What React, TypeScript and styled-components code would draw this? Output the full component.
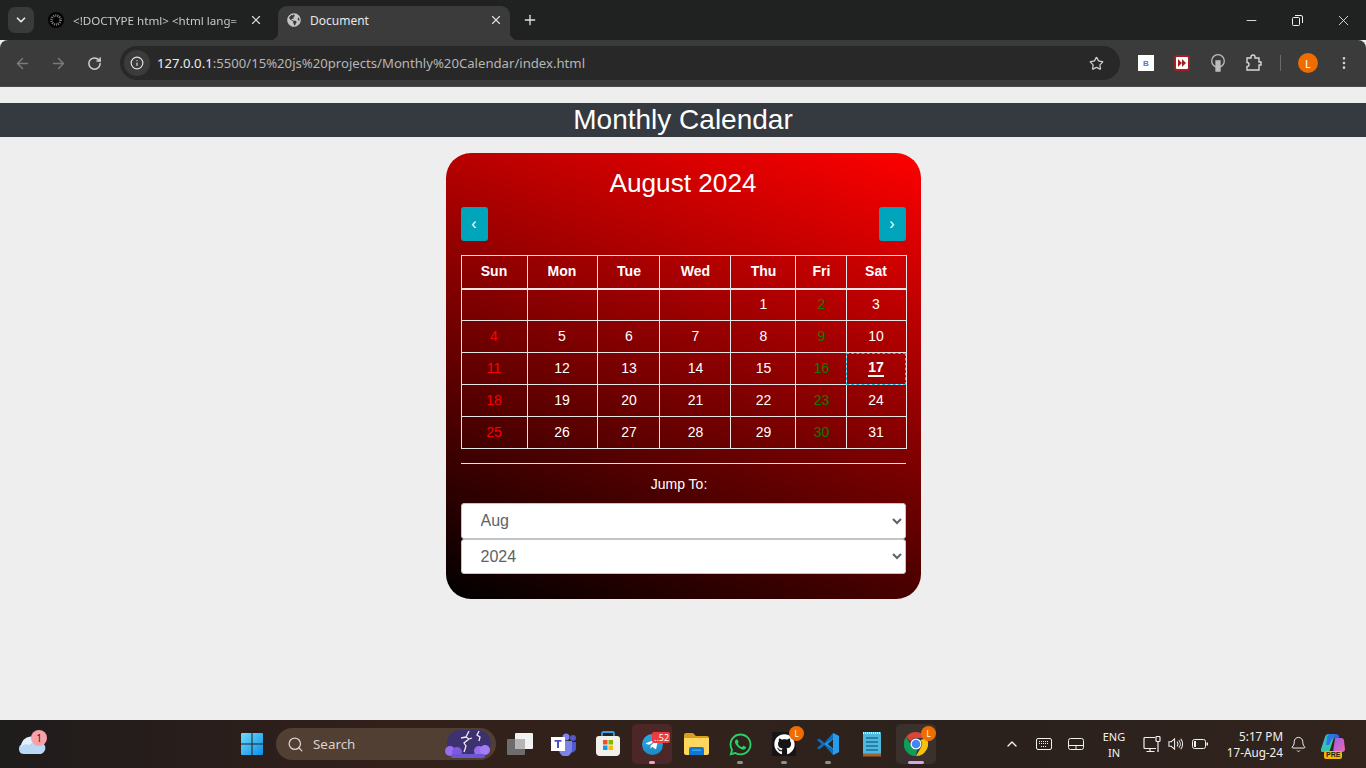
import { ReactNode } from "react";
import styled, { createGlobalStyle } from "styled-components";
import {
  ArrowLeft,
  ArrowRight,
  Bell,
  ChevronDown,
  ChevronUp,
  Info,
  Minus,
  MoreVertical,
  Plus,
  RotateCw,
  Search,
  Star,
  X,
} from "lucide-react";
import { FaGithub, FaGlobeAmericas, FaTelegramPlane, FaWhatsapp } from "react-icons/fa";

const GlobalStyle = createGlobalStyle`
  html, body {
    margin: 0;
    padding: 0;
    height: 768px;
    overflow: hidden;
    background: #eeeeee;
    font-family: "Liberation Sans", Arial, sans-serif;
  }
  * {
    box-sizing: border-box;
  }
`;

const Screen = styled.div`
  width: 1366px;
  height: 768px;
  display: flex;
  flex-direction: column;
  overflow: hidden;
`;

/* browser chrome */

const TabStrip = styled.div`
  height: 40px;
  background: #202222;
  display: flex;
  align-items: flex-end;
  padding-left: 8px;
  font-family: "Noto Sans", "Open Sans", sans-serif;
`;

const TabSearch = styled.div`
  width: 26px;
  height: 26px;
  margin-bottom: 7px;
  border-radius: 7px;
  background: #393a3a;
  color: #e6e6e6;
  display: flex;
  align-items: center;
  justify-content: center;
`;

const Tab = styled.div<{ $active?: boolean }>`
  position: relative;
  height: 34px;
  display: flex;
  align-items: center;
  font-size: 12px;
  padding: ${(p) => (p.$active ? "0 8px 6px 9px" : "0 8px 6px")};
  margin-left: ${(p) => (p.$active ? "8px" : "6px")};
  width: ${(p) => (p.$active ? "232px" : "230px")};
  color: ${(p) => (p.$active ? "#e8e8e8" : "#c8c8c8")};
  background: ${(p) => (p.$active ? "#3b3b3b" : "transparent")};
  border-radius: 9px 9px 0 0;

  ${(p) =>
    p.$active &&
    `
    &::before, &::after {
      content: "";
      position: absolute;
      bottom: 0;
      width: 8px;
      height: 8px;
    }
    &::before {
      left: -8px;
      background: radial-gradient(circle at 0 0, transparent 8px, #3b3b3b 8.5px);
    }
    &::after {
      right: -8px;
      background: radial-gradient(circle at 100% 0, transparent 8px, #3b3b3b 8.5px);
    }
  `}
`;

const TabTitle = styled.span<{ $fade?: boolean }>`
  flex: 1;
  margin-left: 9px;
  white-space: nowrap;
  ${(p) =>
    p.$fade &&
    `
    font-size: 11.6px;
    -webkit-mask-image: linear-gradient(to right, #000 88%, transparent 100%);
    mask-image: linear-gradient(to right, #000 88%, transparent 100%);
  `}
`;

const TabClose = styled(X)`
  color: #dddddd;
  flex: none;
  margin-right: -1px;
`;

const NewTab = styled(Plus)`
  color: #e0e0e0;
  margin: 0 0 12px 12px;
`;

const WindowControls = styled.div`
  margin-left: auto;
  align-self: stretch;
  display: flex;
`;

const WindowButton = styled.div`
  width: 46px;
  color: #f2f2f2;
  display: flex;
  align-items: center;
  justify-content: center;
`;

const Toolbar = styled.div`
  height: 47px;
  background: #3b3b3b;
  border-radius: 8px 8px 0 0;
  border-bottom: 1px solid #4a4a4a;
  display: flex;
  align-items: center;
  padding-left: 4px;
`;

const NavButton = styled.div<{ $dim?: boolean }>`
  width: 36px;
  height: 32px;
  display: flex;
  align-items: center;
  justify-content: center;
  color: ${(p) => (p.$dim ? "#7b7b7b" : "#d0d0d0")};
`;

const AddressBar = styled.div`
  width: 1000px;
  height: 34px;
  margin-left: 8px;
  border-radius: 17px;
  background: #282828;
  display: flex;
  align-items: center;
  padding: 0 16px 0 4px;
`;

const InfoChip = styled.div`
  width: 26px;
  height: 26px;
  border-radius: 50%;
  background: #3b3b3b;
  color: #e2e2e2;
  display: flex;
  align-items: center;
  justify-content: center;
`;

const Url = styled.div`
  flex: 1;
  margin-left: 7px;
  font-family: "Noto Sans", "Open Sans", sans-serif;
  font-size: 13.15px;
  color: #b6b6b6;
  white-space: nowrap;
`;

const UrlHost = styled.span`
  color: #ececec;
`;

const Extensions = styled.div`
  display: flex;
  align-items: center;
  margin-left: 8px;
  flex: 1;
`;

const ExtSlot = styled.div`
  width: 36px;
  height: 32px;
  display: flex;
  align-items: center;
  justify-content: center;
  flex: none;
`;

const ExtB = styled.div`
  width: 16px;
  height: 16px;
  background: #ffffff;
  color: #6a6ad0;
  font: bold 8px "Liberation Sans", sans-serif;
  display: flex;
  align-items: center;
  justify-content: center;
`;

const ToolbarRule = styled.div`
  width: 1px;
  height: 16px;
  background: #6a6a6a;
  margin: 0 9px 0 8px;
`;

const Avatar = styled.div<{ $size?: number; $font?: number }>`
  width: ${(p) => p.$size ?? 20}px;
  height: ${(p) => p.$size ?? 20}px;
  border-radius: 50%;
  background: #ef6c00;
  color: #ffffff;
  font-family: "Noto Sans", sans-serif;
  font-size: ${(p) => p.$font ?? 11}px;
  display: flex;
  align-items: center;
  justify-content: center;
`;

/* page */

const Page = styled.main`
  flex: 1;
  background: #eeeeee;
  padding-top: 16px;
  display: flex;
  flex-direction: column;
  align-items: center;
`;

const Banner = styled.h1`
  width: 100%;
  height: 34px;
  margin: 0;
  background: #343a40;
  color: #ffffff;
  font-size: 28px;
  font-weight: 400;
  line-height: 33px;
  text-align: center;
`;

const Card = styled.section`
  width: 475px;
  height: 446px;
  margin-top: 16px;
  padding: 12px 15px 0;
  border-radius: 25px;
  background: linear-gradient(200deg, #ff0000, #000000);
  color: #ffffff;
`;

const MonthTitle = styled.h3`
  margin: 0;
  font-size: 26.2px;
  font-weight: 400;
  line-height: 36px;
  text-align: center;
`;

const NavRow = styled.div`
  display: flex;
  justify-content: space-between;
  margin-top: 6px;
`;

const MonthButton = styled.button`
  width: 27px;
  height: 34px;
  padding: 0;
  border: none;
  border-radius: 3px;
  background: #00a5bb;
  color: #ffffff;
  font: 16px "Liberation Sans", sans-serif;
`;

const Table = styled.table`
  width: 445px;
  margin-top: 14px;
  table-layout: fixed;
  border-collapse: collapse;
  font-size: 14px;

  th:nth-child(n + 3):nth-child(-n + 6),
  td:nth-child(n + 3):nth-child(-n + 6) {
    padding-left: 2px;
  }
`;

const Col = styled.col<{ $w: number }>`
  width: ${(p) => p.$w}px;
`;

const HeadCell = styled.th`
  height: 33px;
  padding: 0 0 2px;
  border: 1px solid #e6e6e6;
  border-bottom-width: 2px;
  font-weight: 700;
  text-align: center;
`;

const Cell = styled.td<{ $tone?: "sun" | "fri"; $today?: boolean }>`
  height: 32px;
  padding: 0 0 2px;
  border: 1px solid #e6e6e6;
  text-align: center;
  color: ${(p) =>
    p.$tone === "sun" ? "#ff0000" : p.$tone === "fri" ? "#107a00" : "#ffffff"};
  ${(p) =>
    p.$today &&
    `
    font-weight: 700;
    outline: 1px dashed #19c4e6;
    outline-offset: -1px;
  `}
`;

const Today = styled.span`
  display: inline-block;
  margin-top: 2px;
  line-height: 15px;
  border-bottom: 2px solid #ffffff;
`;

const Rule = styled.hr`
  height: 1px;
  margin: 14px 0 0;
  border: none;
  background: #e6e6e6;
`;

const JumpLabel = styled.label`
  display: block;
  margin: 12px 8px 11px 0;
  font-size: 14px;
  line-height: 16px;
  text-align: center;
`;

const SelectBox = styled.select`
  display: block;
  width: 100%;
  height: 35.5px;
  padding: 0 0 0 15px;
  border: 1px solid #bfc5c8;
  border-radius: 3px;
  background: #ffffff;
  color: #5c6268;
  font: 16px "Liberation Sans", sans-serif;
`;

/* taskbar */

const Taskbar = styled.footer`
  height: 48px;
  flex: none;
  display: flex;
  align-items: center;
  background: linear-gradient(
    to right,
    #1f1c1c 0%,
    #33201a 30%,
    #30221c 55%,
    #2a211d 75%,
    #33241d 100%
  );
  color: #f2f2f2;
  font-family: "Noto Sans", "Open Sans", sans-serif;
`;

const Slot = styled.div<{ $w?: number; $ml?: number; $active?: "pink" | "plain" }>`
  position: relative;
  width: ${(p) => p.$w ?? 44}px;
  height: 40px;
  margin-left: ${(p) => p.$ml ?? 0}px;
  flex: none;
  display: flex;
  align-items: center;
  justify-content: center;
  &::before {
    content: "";
    position: absolute;
    top: 0;
    bottom: 0;
    left: 2px;
    right: 2px;
    border-radius: 5px;
    background: ${(p) =>
      p.$active === "pink"
        ? "rgba(120, 50, 60, 0.4)"
        : p.$active === "plain"
          ? "rgba(255, 255, 255, 0.07)"
          : "transparent"};
  }
  & > * {
    position: relative;
  }
`;

const RunDot = styled.span<{ $color?: string; $wide?: boolean }>`
  position: absolute !important;
  bottom: 0;
  left: 50%;
  width: ${(p) => (p.$wide ? 16 : 6)}px;
  height: 3px;
  margin-left: ${(p) => (p.$wide ? -8 : -3)}px;
  border-radius: 2px;
  background: ${(p) => p.$color ?? "#8f8f8f"};
`;

const Badge = styled.span`
  position: absolute !important;
  top: 2px;
  right: 2px;
`;

const WeatherBadge = styled.span`
  position: absolute !important;
  top: 6px;
  left: 21px;
  width: 16px;
  height: 16px;
  border-radius: 50%;
  background: #f9a0aa;
  color: #222222;
  font-size: 10px;
  line-height: 16px;
  text-align: center;
`;

const CountBadge = styled.span`
  position: absolute !important;
  top: 8px;
  left: 22px;
  padding: 0 1px 0 2px;
  height: 11px;
  border-radius: 2px;
  background: #ee3b3b;
  color: #ffffff;
  font-size: 9px;
  line-height: 11px;
`;

const TelegramDisc = styled.div`
  width: 21px;
  height: 21px;
  border-radius: 50%;
  background: linear-gradient(to bottom, #2fa8e0, #1c8ac8);
  display: flex;
  align-items: center;
  justify-content: center;
`;

const GithubTile = styled.div`
  width: 24px;
  height: 24px;
  background: #151515;
  display: flex;
  align-items: center;
  justify-content: center;
`;

const SearchBox = styled.div`
  width: 220px;
  height: 32px;
  margin: 0 2px;
  flex: none;
  border-radius: 16px;
  background: #523f33;
  display: flex;
  align-items: center;
  padding: 0 5px 0 11px;
  font-size: 13.4px;
  color: #d8d4d0;
`;

const SearchLabel = styled.span`
  margin-left: 9px;
  flex: 1;
`;

const Tray = styled.div`
  margin-left: 62px;
  display: flex;
  align-items: center;
  height: 40px;
`;

const TrayItem = styled.div<{ $w: number }>`
  width: ${(p) => p.$w}px;
  flex: none;
  display: flex;
  align-items: center;
  justify-content: center;
`;

const Lang = styled.div`
  width: 44px;
  margin-left: 4px;
  padding-top: 2px;
  text-align: center;
  font-size: 11px;
  line-height: 16px;
`;

const Clock = styled.div`
  width: 67px;
  text-align: right;
  font-size: 11.7px;
  line-height: 16px;
  white-space: nowrap;
`;

const Pre = styled.span`
  position: absolute !important;
  bottom: 5px;
  left: 50%;
  margin-left: -9px;
  padding: 0 2px;
  border-radius: 2px;
  background: #f5b800;
  color: #222222;
  font: bold 7px/8px "Liberation Sans", sans-serif;
`;

const Squares = () => (
  <svg width="22" height="22" viewBox="0 0 22 22">
    <defs>
      <linearGradient id="win" x1="0" y1="0" x2="1" y2="1">
        <stop offset="0" stopColor="#6fdcff" />
        <stop offset="1" stopColor="#0b8fe6" />
      </linearGradient>
    </defs>
    <path fill="url(#win)" d="M0 1a1 1 0 0 1 1-1h9.500v10.500H0zM11.500 0H21a1 1 0 0 1 1 1v9.500H11.500zM0 11.500h10.500V22H1a1 1 0 0 1-1-1zM11.500 11.500H22V21a1 1 0 0 1-1 1h-9.500z" />
  </svg>
);

const Weather = () => (
  <svg width="28" height="22" viewBox="0 0 28 22">
    <circle cx="19" cy="7" r="6" fill="#f08a3c" />
    <path fill="#b9d8f5" d="M6 21a5 5 0 0 1-1-9.900A8 8 0 0 1 19 9a6 6 0 0 1 4 12z" />
    <path fill="#e4f1fc" d="M3 14a6 6 0 0 1 8-2 8 8 0 0 1 12 1 8 8 0 0 0-20 1z" />
  </svg>
);

const Storm = () => (
  <svg width="48" height="28" viewBox="0 0 48 28">
    <rect x="4" width="44" height="26" rx="13" fill="#3d3170" />
    <circle cx="7" cy="21" r="5" fill="#9a6cf0" />
    <circle cx="14" cy="22" r="5" fill="#8058e0" />
    <circle cx="36" cy="21" r="5" fill="#9a6cf0" />
    <circle cx="42" cy="20" r="5" fill="#a67cf4" />
    <rect x="8" y="24" width="34" height="4" rx="2" fill="#6a58d0" />
    <path fill="none" stroke="#efeaf5" strokeWidth="1.300" d="M26 1l-3 6 3 2-5 4 2 3-2 6M36 1l-2 4 3 2-1 4M23 7l-5 1M26 9l3-1" />
  </svg>
);

const TaskView = () => (
  <svg width="26" height="24" viewBox="0 0 26 24">
    <rect x="8" y="1" width="18" height="16" rx="1" fill="#f1f1f1" />
    <rect x="0" y="7" width="18" height="16" rx="1" fill="#6d6d6d" />
    <rect x="8" y="7" width="10" height="10" fill="#b5b5b5" />
  </svg>
);

const Teams = () => (
  <svg width="26" height="24" viewBox="0 0 26 24">
    <circle cx="15" cy="5" r="3.500" fill="#7b83eb" />
    <circle cx="22" cy="6" r="3" fill="#5059c9" />
    <path fill="#5059c9" d="M18 10h7v7a4 4 0 0 1-7 2z" />
    <path fill="#7b83eb" d="M8 9h13v9a6 6 0 0 1-13 0z" />
    <rect x="0" y="5" width="14" height="14" fill="#ffffff" />
    <path fill="#4b53bc" d="M3.500 8h7v1.800H8v6.200H6V9.800H3.500z" />
  </svg>
);

const StoreBag = () => (
  <svg width="24" height="26" viewBox="0 0 24 26">
    <path fill="none" stroke="#3aa0e8" strokeWidth="1.800" d="M6 6V2.500a1.500 1.500 0 0 1 1.500-1.500h9a1.500 1.500 0 0 1 1.500 1.500V6" />
    <path fill="#f2f0ed" d="M0 8a3 3 0 0 1 3-3h18a3 3 0 0 1 3 3v13a4 4 0 0 1-4 4H4a4 4 0 0 1-4-4z" />
    <rect x="7" y="9" width="4.500" height="4.500" fill="#f25022" />
    <rect x="12.500" y="9" width="4.500" height="4.500" fill="#7fba00" />
    <rect x="7" y="14.500" width="4.500" height="4.500" fill="#00a4ef" />
    <rect x="12.500" y="14.500" width="4.500" height="4.500" fill="#ffb900" />
  </svg>
);

const Folder = () => (
  <svg width="25" height="22" viewBox="0 0 25 22">
    <path fill="#d99f1c" d="M0 2a2 2 0 0 1 2-2h7l3 3h11a2 2 0 0 1 2 2v4H0z" />
    <path fill="#ffd75e" d="M0 5h25v15a2 2 0 0 1-2 2H2a2 2 0 0 1-2-2z" />
    <path fill="#0f78d4" d="M5 16a2 2 0 0 1 2-2h11a2 2 0 0 1 2 2v6H5z" />
    <path fill="#3ba4ee" d="M8 16.500h9v1.500H8z" />
  </svg>
);

const VsCode = () => (
  <svg width="24" height="24" viewBox="0 0 24 24">
    <path fill="#0a6fbf" d="M1 8l2-1.500 5.500 4.200L17 1l6 3v16l-6 3-8.500-9.700L3 17.500 1 16l4.500-4z" />
    <path fill="#2b9cea" d="M17 1l6 3v16l-6 3V7l-8.500 5L17 17z" />
    <path fill="#26272a" d="M17 7.500v9l-5.500-4.500z" />
  </svg>
);

const Notepad = () => (
  <svg width="20" height="26" viewBox="0 0 20 26">
    <rect x="1" y="1" width="18" height="24" rx="1" fill="#4fb8de" />
    <rect x="1" y="22.500" width="18" height="3" fill="#a8602c" />
    <path stroke="#1b6f94" strokeWidth="1.500" d="M4 7h12M4 11h12M4 15h12M4 19h12" />
    <path stroke="#d8eef6" strokeWidth="2" strokeDasharray="1 1" d="M1 2h18" />
  </svg>
);

const ChromeLogo = () => (
  <svg width="24" height="24" viewBox="0 0 24 24">
    <path fill="#db4437" d="M12 0a12 12 0 0 1 10.400 6H12a6 6 0 0 0-5.500 3.600L2.300 4.700A12 12 0 0 1 12 0z" />
    <path fill="#f4c20d" d="M22.400 6A12 12 0 0 1 12 24l5.200-9A6 6 0 0 0 16.500 8z" />
    <path fill="#0f9d58" d="M12 24A12 12 0 0 1 2.300 4.700L7 13a6 6 0 0 0 6 5z" />
    <circle cx="12" cy="12" r="5.500" fill="#ffffff" />
    <circle cx="12" cy="12" r="4.300" fill="#4285f4" />
  </svg>
);

const PlayBadge = () => (
  <svg width="16" height="16" viewBox="0 0 16 16">
    <rect width="16" height="16" rx="3" fill="#a32020" />
    <rect x="2" y="2" width="12" height="12" rx="1" fill="#ffffff" />
    <path fill="#a32020" d="M4 4l4 4-4 4zM8 4l4 4-4 4z" />
  </svg>
);

const Bulb = () => (
  <svg width="16" height="18" viewBox="0 0 16 18" fill="none" stroke="#bdbdbd" strokeWidth="1.300">
    <circle cx="8" cy="7" r="6.300" />
    <path fill="#bdbdbd" d="M6 7h4v10H6z" />
  </svg>
);

const Puzzle = () => (
  <svg width="18" height="18" viewBox="0 0 18 18" fill="none" stroke="#d8d8d8" strokeWidth="1.400">
    <path d="M2 4h4V3a2 2 0 0 1 4 0v1h4v4h2v3h-2v5H2v-3.500a2 2 0 0 0 0-4z" />
  </svg>
);

const RestoreIcon = () => (
  <svg width="11" height="11" viewBox="0 0 11 11" fill="none" stroke="currentColor">
    <rect x="0.500" y="2.500" width="7" height="8" rx="1" />
    <path d="M3 0.500h6a1.500 1.500 0 0 1 1.500 1.500v6" />
  </svg>
);

const FaviconDots = () => (
  <svg width="16" height="16" viewBox="0 0 16 16">
    <circle cx="8" cy="8" r="8" fill="#000000" />
    <circle cx="8" cy="8" r="4.500" fill="none" stroke="#8a8a8a" strokeWidth="2.500" strokeDasharray="1 1" />
  </svg>
);

const KeyboardIcon = () => (
  <svg width="16" height="12" viewBox="0 0 16 12" fill="none" stroke="#f0f0f0">
    <rect x="0.500" y="0.500" width="15" height="11" rx="1.500" />
    <path strokeDasharray="1 1" d="M3 3.500h10M3 5.500h10M5 8.500h6" />
  </svg>
);

const TouchpadIcon = () => (
  <svg width="16" height="12" viewBox="0 0 16 12" fill="none" stroke="#f0f0f0">
    <rect x="0.500" y="0.500" width="15" height="11" rx="2" />
    <path d="M1 7.500h14M8 7.500v4" />
  </svg>
);

const NetworkIcon = () => (
  <svg width="18" height="17" viewBox="0 0 18 17" fill="none" stroke="#f0f0f0" strokeWidth="1.200">
    <path d="M12 1.500H2a1 1 0 0 0-1 1v9a1 1 0 0 0 1 1h11M7 13v2.500M3.500 15.500h8" />
    <rect x="13" y="0.500" width="4" height="5" rx="1" />
    <path d="M15 5.500V16" />
  </svg>
);

const VolumeIcon = () => (
  <svg width="17" height="14" viewBox="0 0 17 14" fill="none" stroke="#f0f0f0" strokeWidth="1.100">
    <path d="M1 4.500h2.500L7 1.500v11l-3.500-3H1z" />
    <path d="M9.500 4.500a3.500 3.500 0 0 1 0 5M11.500 3a6 6 0 0 1 0 8M13.500 1.500a8.500 8.500 0 0 1 0 11" />
  </svg>
);

const BatteryIcon = () => (
  <svg width="16" height="10" viewBox="0 0 16 10">
    <rect x="0.500" y="0.500" width="13" height="9" rx="2" fill="none" stroke="#f0f0f0" />
    <rect x="2" y="2" width="2" height="6" fill="#f0f0f0" />
    <rect x="14.500" y="3.500" width="1.500" height="3" fill="#f0f0f0" />
  </svg>
);

const Copilot = () => (
  <svg width="24" height="22" viewBox="0 0 24 22">
    <defs>
      <linearGradient id="cpA" x1="0" y1="0" x2="1" y2="1">
        <stop offset="0" stopColor="#2fb5e8" />
        <stop offset="1" stopColor="#3ecf7a" />
      </linearGradient>
      <linearGradient id="cpB" x1="0" y1="0" x2="1" y2="1">
        <stop offset="0" stopColor="#9a5cf0" />
        <stop offset="1" stopColor="#f06aa8" />
      </linearGradient>
    </defs>
    <path fill="url(#cpA)" d="M8 1h6l-5 16a3 3 0 0 1-3 2H2a2 2 0 0 1-2-3l4-12a4 4 0 0 1 4-3z" />
    <path fill="url(#cpB)" d="M14 5h6a3 3 0 0 1 3 3l1 8a3 3 0 0 1-3 3h-9z" />
    <path fill="#2a6fe8" d="M8 1h7a3 3 0 0 1 3 4h-5a4 4 0 0 0-3 3L8 12H5l1-6a5 5 0 0 1 2-5z" opacity="0.900" />
  </svg>
);

const DAYS = ["Sun", "Mon", "Tue", "Wed", "Thu", "Fri", "Sat"];
const COLS = [66, 70, 62, 71, 65, 51, 60];
const MONTHS = ["Jan", "Feb", "Mar", "Apr", "May", "Jun", "Jul", "Aug", "Sep", "Oct", "Nov", "Dec"];
const WEEKS: (number | null)[][] = [
  [null, null, null, null, 1, 2, 3],
  [4, 5, 6, 7, 8, 9, 10],
  [11, 12, 13, 14, 15, 16, 17],
  [18, 19, 20, 21, 22, 23, 24],
  [25, 26, 27, 28, 29, 30, 31],
];

const tone = (col: number) => (col === 0 ? "sun" : col === 5 ? "fri" : undefined);

function AppSlot({
  children,
  dot,
  wide,
  active,
}: {
  children: ReactNode;
  dot?: string;
  wide?: boolean;
  active?: "pink" | "plain";
}) {
  return (
    <Slot $active={active}>
      {children}
      {dot && <RunDot $color={dot} $wide={wide} />}
    </Slot>
  );
}

export default function App() {
  return (
    <Screen>
      <GlobalStyle />
      <TabStrip>
        <TabSearch>
          <ChevronDown size={14} strokeWidth={3} />
        </TabSearch>
        <Tab>
          <FaviconDots />
          <TabTitle $fade>&lt;!DOCTYPE html&gt; &lt;html lang=</TabTitle>
          <TabClose size={14} />
        </Tab>
        <Tab $active>
          <FaGlobeAmericas size={14} color="#c4c4c4" />
          <TabTitle>Document</TabTitle>
          <TabClose size={14} />
        </Tab>
        <NewTab size={16} />
        <WindowControls>
          <WindowButton>
            <Minus size={15} strokeWidth={1.4} />
          </WindowButton>
          <WindowButton>
            <RestoreIcon />
          </WindowButton>
          <WindowButton>
            <X size={17} strokeWidth={1.2} />
          </WindowButton>
        </WindowControls>
      </TabStrip>

      <Toolbar>
        <NavButton $dim>
          <ArrowLeft size={17} />
        </NavButton>
        <NavButton $dim>
          <ArrowRight size={17} />
        </NavButton>
        <NavButton>
          <RotateCw size={15} strokeWidth={2.4} />
        </NavButton>
        <AddressBar>
          <InfoChip>
            <Info size={14} />
          </InfoChip>
          <Url>
            <UrlHost>127.0.0.1</UrlHost>:5500/15%20js%20projects/Monthly%20Calendar/index.html
          </Url>
          <Star size={15} color="#d0d0d0" />
        </AddressBar>
        <Extensions>
          <ExtSlot>
            <ExtB>B</ExtB>
          </ExtSlot>
          <ExtSlot>
            <PlayBadge />
          </ExtSlot>
          <ExtSlot>
            <Bulb />
          </ExtSlot>
          <ExtSlot>
            <Puzzle />
          </ExtSlot>
          <ToolbarRule />
          <ExtSlot>
            <Avatar>L</Avatar>
          </ExtSlot>
          <ExtSlot>
            <MoreVertical size={16} color="#d0d0d0" />
          </ExtSlot>
        </Extensions>
      </Toolbar>

      <Page>
        <Banner>Monthly Calendar</Banner>
        <Card>
          <MonthTitle>August 2024</MonthTitle>
          <NavRow>
            <MonthButton>‹</MonthButton>
            <MonthButton>›</MonthButton>
          </NavRow>
          <Table>
            <colgroup>
              {COLS.map((w, i) => (
                <Col key={i} $w={w} />
              ))}
            </colgroup>
            <thead>
              <tr>
                {DAYS.map((d) => (
                  <HeadCell key={d}>{d}</HeadCell>
                ))}
              </tr>
            </thead>
            <tbody>
              {WEEKS.map((week, r) => (
                <tr key={r}>
                  {week.map((d, c) => (
                    <Cell key={c} $tone={tone(c)} $today={d === 17}>
                      {d === 17 ? <Today>{d}</Today> : d}
                    </Cell>
                  ))}
                </tr>
              ))}
            </tbody>
          </Table>
          <Rule />
          <JumpLabel htmlFor="month">Jump To:</JumpLabel>
          <SelectBox id="month" defaultValue="Aug">
            {MONTHS.map((m) => (
              <option key={m}>{m}</option>
            ))}
          </SelectBox>
          <SelectBox defaultValue="2024">
            {[2022, 2023, 2024, 2025, 2026].map((y) => (
              <option key={y}>{y}</option>
            ))}
          </SelectBox>
        </Card>
      </Page>

      <Taskbar>
        <Slot $w={44} $ml={10}>
          <Weather />
          <WeatherBadge>1</WeatherBadge>
        </Slot>
        <Slot $w={44} $ml={176}>
          <Squares />
        </Slot>
        <SearchBox>
          <Search size={17} strokeWidth={1.8} />
          <SearchLabel>Search</SearchLabel>
          <Storm />
        </SearchBox>
        <AppSlot>
          <TaskView />
        </AppSlot>
        <AppSlot>
          <Teams />
        </AppSlot>
        <AppSlot>
          <StoreBag />
        </AppSlot>
        <AppSlot active="pink" dot="#f4a6b8">
          <TelegramDisc>
            <FaTelegramPlane size={14} color="#ffffff" />
          </TelegramDisc>
          <CountBadge>..52</CountBadge>
        </AppSlot>
        <AppSlot>
          <Folder />
        </AppSlot>
        <AppSlot dot="#8f8f8f">
          <FaWhatsapp size={25} color="#25d366" />
        </AppSlot>
        <AppSlot dot="#8f8f8f">
          <GithubTile>
            <FaGithub size={21} color="#ffffff" />
          </GithubTile>
          <Badge>
            <Avatar $size={15} $font={8}>L</Avatar>
          </Badge>
        </AppSlot>
        <AppSlot dot="#8f8f8f">
          <VsCode />
        </AppSlot>
        <AppSlot>
          <Notepad />
        </AppSlot>
        <AppSlot active="plain" dot="#d9a6ec" wide>
          <ChromeLogo />
          <Badge>
            <Avatar $size={15} $font={8}>L</Avatar>
          </Badge>
        </AppSlot>
        <Tray>
          <TrayItem $w={24}>
            <ChevronUp size={16} />
          </TrayItem>
          <TrayItem $w={40}>
            <KeyboardIcon />
          </TrayItem>
          <TrayItem $w={24}>
            <TouchpadIcon />
          </TrayItem>
          <Lang>
            ENG
            <br />
            IN
          </Lang>
          <TrayItem $w={32}>
            <NetworkIcon />
          </TrayItem>
          <TrayItem $w={16}>
            <VolumeIcon />
          </TrayItem>
          <TrayItem $w={32}>
            <BatteryIcon />
          </TrayItem>
          <Clock>
            5:17 PM
            <br />
            17-Aug-24
          </Clock>
          <TrayItem $w={30}>
            <Bell size={17} strokeWidth={1.4} />
          </TrayItem>
          <Slot $w={40}>
            <Copilot />
            <Pre>PRE</Pre>
          </Slot>
        </Tray>
      </Taskbar>
    </Screen>
  );
}
